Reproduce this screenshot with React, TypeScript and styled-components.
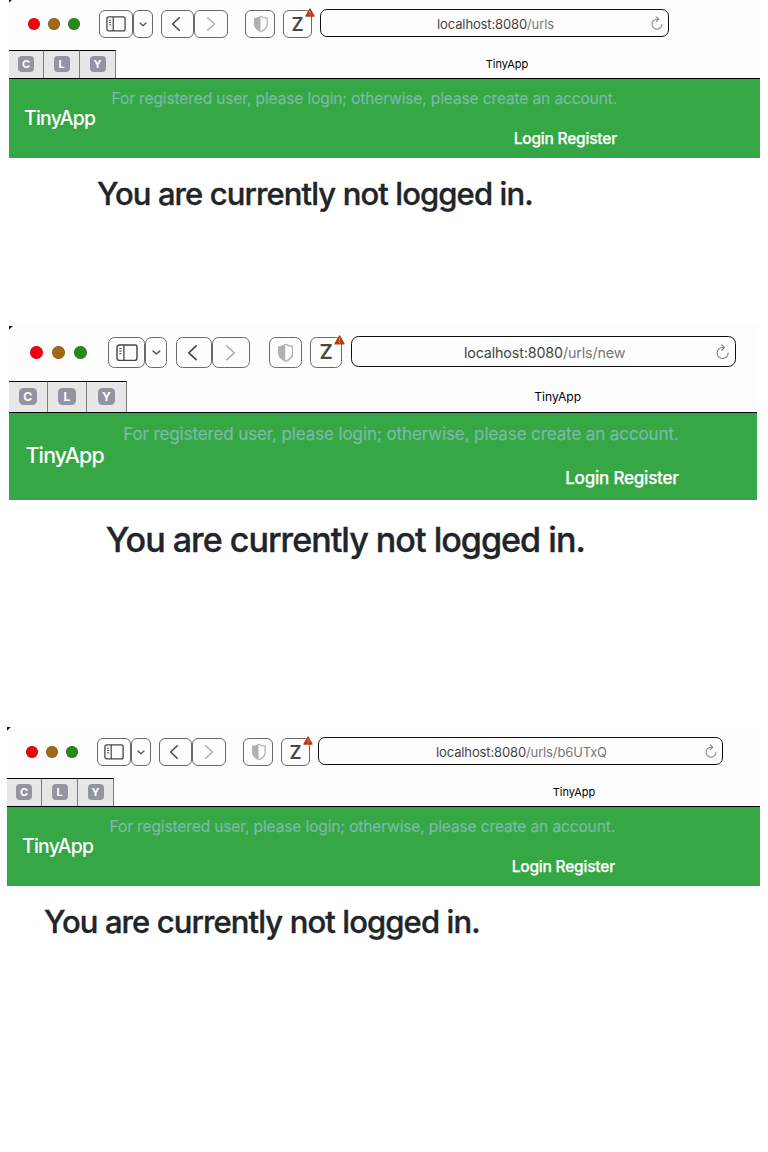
import React from "react";
import styled, { createGlobalStyle } from "styled-components";

type Scale = { $k: number };
const u = (n: number) => (p: Scale) => `${+(n * p.$k).toFixed(2)}px`;

const GlobalStyle = createGlobalStyle`
  * { box-sizing: border-box; }
  body { margin: 0; background: #fff; font-family: Inter, "Liberation Sans", sans-serif; overflow: hidden; }
`;

const Page = styled.main`
  display: flex;
  flex-direction: column;
  margin-top: -1px;
  width: 768px;
  height: 1153px;
  overflow: hidden;
`;

const Window = styled.section<{ $left: number; $width: number; $height: number }>`
  margin-left: ${(p) => p.$left}px;
  width: ${(p) => p.$width}px;
  height: ${(p) => p.$height}px;
  flex: none;
`;

const Toolbar = styled.div<Scale>`
  display: flex;
  align-items: flex-start;
  height: ${u(51)};
  padding-top: ${u(11)};
  background: #fdfdfd linear-gradient(135deg, #2a0828 0, #2a0828 2.4px, #fdfdfd 3px) 0
    ${(p) => (p.$k > 1 ? 1 : 0)}px no-repeat;
`;

const Lights = styled.div<Scale>`
  display: flex;
  gap: ${u(8)};
  margin: ${u(8)} ${u(19)} 0 ${u(19)};
`;

const Light = styled.i<Scale & { $color: string }>`
  width: ${u(12)};
  height: ${u(12)};
  border-radius: 50%;
  background: ${(p) => p.$color};
  box-shadow: inset 0 0 0 0.5px rgba(0, 0, 0, 0.25);
`;

const ToolButton = styled.div<Scale & { $w: number; $gap?: number; $nudge?: number }>`
  position: relative;
  display: flex;
  align-items: center;
  justify-content: center;
  width: ${(p) => p.$w * p.$k}px;
  height: ${u(28)};
  margin-right: ${(p) => (p.$gap || 0) * p.$k}px;
  padding-right: ${(p) => (p.$nudge || 0) * p.$k}px;
  border: 1px solid #6a6a6a;
  border-radius: ${u(6)};
  flex: none;
  svg { display: block; flex: none; }
`;

const ZMark = styled.span<Scale>`
  font-size: ${u(18.5)};
  line-height: 1;
  font-weight: 600;
  color: #484848;
`;

const Warning = styled.span<Scale>`
  position: absolute;
  top: ${u(-3)};
  right: ${u(-3.5)};
`;

const Address = styled.div<Scale & { $w: number }>`
  display: flex;
  align-items: center;
  width: ${(p) => p.$w * p.$k}px;
  height: ${u(28)};
  margin-top: ${u(-1)};
  padding: 0 ${u(5)} 0 ${u(19)};
  border: 1px solid #111;
  border-radius: ${u(7)};
  flex: none;
`;

const Url = styled.span<Scale>`
  flex: 1;
  text-align: center;
  font-size: ${u(13)};
  line-height: ${u(16)};
  letter-spacing: ${u(-0.13)};
  padding-top: ${u(2)};
  color: #444;
  white-space: nowrap;
`;

const Path = styled.span`
  color: #777;
`;

const TabBar = styled.div<Scale>`
  display: flex;
  height: ${u(29)};
  border-bottom: 1px solid #000;
  background: #fdfdfd;
  overflow: hidden;
`;

const PinnedTab = styled.div<Scale & { $w: number }>`
  display: flex;
  align-items: center;
  justify-content: center;
  flex: none;
  width: ${(p) => p.$w * p.$k}px;
  border-top: 1px solid #000;
  border-right: 1px solid #7c7c7c;
  background: #e7e7e7;
`;

const Letter = styled.span<Scale>`
  display: flex;
  align-items: center;
  justify-content: center;
  width: ${u(16)};
  height: ${u(16)};
  margin-top: ${u(-1)};
  border-radius: ${u(4)};
  background: #9494a1;
  color: #fff;
  font-size: ${u(11)};
  font-weight: 700;
`;

const ActiveTab = styled.div<Scale & { $w: number }>`
  flex: none;
  width: ${(p) => p.$w}px;
  text-align: center;
  font-size: ${u(11)};
  line-height: ${u(28.5)};
  color: #000;
`;

const Navbar = styled.header<Scale>`
  display: flex;
  align-items: center;
  height: ${u(79)};
  padding: 0 ${u(15)};
  background: #36a745;
`;

const Brand = styled.span<Scale>`
  width: ${u(71)};
  margin-right: ${u(16)};
  padding-bottom: ${u(2)};
  font-size: ${u(19.4)};
  font-weight: 500;
  letter-spacing: ${u(-0.75)};
  color: #fff;
  white-space: nowrap;
`;

const Account = styled.div<Scale>`
  display: flex;
  flex-direction: column;
  align-items: flex-end;
  width: ${(p) => (p.$k > 1 ? 557.5 : 506)}px;
  font-size: ${u(15.5)};
  line-height: ${u(40)};
  white-space: nowrap;
`;

const Notice = styled.span<Scale>`
  color: #7bbaa9;
  letter-spacing: ${u(-0.12)};
  -webkit-text-stroke: 0.2px #7bbaa9;
`;

const Links = styled.nav<Scale>`
  color: #fff;
  font-weight: 500;
  letter-spacing: ${u(-0.2)};
  -webkit-text-stroke: 0.25px #fff;
`;

const Heading = styled.h1<Scale & { $indent: number }>`
  margin: ${(p) => (p.$k > 1 ? 19 : 16)}px 0 0 ${(p) => (p.$indent - 1) * p.$k}px;
  font-size: ${u(31)};
  line-height: ${u(39)};
  font-weight: 500;
  letter-spacing: ${u(-0.9)};
  -webkit-text-stroke: 0.35px #212529;
  color: #212529;
  white-space: nowrap;
`;

const SidebarIcon = ({ k }: { k: number }) => (
  <svg width={20 * k} height={16 * k} viewBox="0 0 20 16" fill="none" stroke="#454545">
    <rect x="0.9" y="0.9" width="18.2" height="14" rx="2" strokeWidth="1.3" />
    <path d="M7.2 1v14" strokeWidth="1.2" />
    <path d="M3 4.2h2.2M3 6.5h2.2M3 8.8h2.2" strokeWidth="0.9" />
  </svg>
);

const DownIcon = ({ k }: { k: number }) => (
  <svg width={8 * k} height={5 * k} viewBox="0 0 8 5" fill="none" stroke="#555" strokeWidth="1.3" strokeLinecap="round" strokeLinejoin="round">
    <path d="M1 1l3 2.7L7 1" />
  </svg>
);

const ArrowIcon = ({ k, forward }: { k: number; forward?: boolean }) => (
  <svg width={10 * k} height={16 * k} viewBox="0 0 10 16" fill="none" stroke={forward ? "#b0b0b0" : "#444"} strokeWidth="1.5" strokeLinecap="round" strokeLinejoin="round">
    <path d={forward ? "M1.7 1.7L8.4 8l-6.7 6.3" : "M8.3 1.7L1.6 8l6.7 6.3"} />
  </svg>
);

const ShieldIcon = ({ k }: { k: number }) => (
  <svg width={15 * k} height={18 * k} viewBox="0 0 14 17">
    <path d="M7 .7C5.2 2 3.2 2.6.8 2.9v6C.8 12.5 4.5 15 7 16.2z" fill="#b0b0b0" />
    <path d="M7 .9C8.8 2.2 10.8 2.8 13.3 3v5.9C13.3 12.4 9.5 14.9 7 16" fill="none" stroke="#b0b0b0" strokeWidth="1.2" />
  </svg>
);

const WarningIcon = ({ k }: { k: number }) => (
  <svg width={10 * k} height={9 * k} viewBox="0 0 10 9">
    <path d="M5 1l4 7H1z" fill="#b83b12" stroke="#b83b12" strokeWidth="1.4" strokeLinejoin="round" />
    <path d="M5 3v2.6M5 6.5v.8" stroke="#e0a08a" strokeWidth="0.9" />
  </svg>
);

const ReloadIcon = ({ k }: { k: number }) => (
  <svg width={12 * k} height={14 * k} viewBox="0 0 12 14" fill="none" stroke="#858585" strokeWidth="1.1" strokeLinecap="round" strokeLinejoin="round">
    <path d="M7.2 3.2H6A5 5 0 1 0 11 8.2" />
    <path d="M5.3.8l2.4 2.4-2.4 2.5" />
  </svg>
);

type BrowserProps = {
  k: number;
  left: number;
  width: number;
  height: number;
  path: string;
  address: number;
  tabWidth: number;
  indent: number;
};

function Browser({ k, left, width, height, path, address, tabWidth, indent }: BrowserProps) {
  return (
    <Window $left={left} $width={width} $height={height}>
      <Toolbar $k={k}>
        <Lights $k={k}>
          <Light $k={k} $color="#f30013" />
          <Light $k={k} $color="#a16916" />
          <Light $k={k} $color="#268a16" />
        </Lights>
        <ToolButton $k={k} $w={34}><SidebarIcon k={k} /></ToolButton>
        <ToolButton $k={k} $w={20} $gap={8}><DownIcon k={k} /></ToolButton>
        <ToolButton $k={k} $w={33} $gap={-0.5} $nudge={3}><ArrowIcon k={k} /></ToolButton>
        <ToolButton $k={k} $w={34.5} $gap={17}><ArrowIcon k={k} forward /></ToolButton>
        <ToolButton $k={k} $w={30} $gap={8}><ShieldIcon k={k} /></ToolButton>
        <ToolButton $k={k} $w={29} $gap={8}>
          <ZMark $k={k}>Z</ZMark>
          <Warning $k={k}><WarningIcon k={k} /></Warning>
        </ToolButton>
        <Address $k={k} $w={address}>
          <Url $k={k}>localhost:8080<Path>{path}</Path></Url>
          <ReloadIcon k={k} />
        </Address>
      </Toolbar>
      <TabBar $k={k}>
        <PinnedTab $k={k} $w={35}><Letter $k={k}>C</Letter></PinnedTab>
        <PinnedTab $k={k} $w={36}><Letter $k={k}>L</Letter></PinnedTab>
        <PinnedTab $k={k} $w={36}><Letter $k={k}>Y</Letter></PinnedTab>
        <ActiveTab $k={k} $w={tabWidth}>TinyApp</ActiveTab>
      </TabBar>
      <Navbar $k={k}>
        <Brand $k={k}>TinyApp</Brand>
        <Account $k={k}>
          <Notice $k={k}>For registered user, please login; otherwise, please create an account.</Notice>
          <Links $k={k}>Login Register</Links>
        </Account>
      </Navbar>
      <Heading $k={k} $indent={indent}>You are currently not logged in.</Heading>
    </Window>
  );
}

export default function App() {
  return (
    <>
      <GlobalStyle />
      <Page>
        <Browser k={1} left={9} width={751} height={326} path="/urls" address={349} tabWidth={782} indent={89} />
        <Browser k={1.1} left={9} width={748} height={402} path="/urls/new" address={350} tabWidth={862} indent={89} />
        <Browser k={1} left={7} width={753} height={426} path="/urls/b6UTxQ" address={405} tabWidth={920} indent={38} />
      </Page>
    </>
  );
}
